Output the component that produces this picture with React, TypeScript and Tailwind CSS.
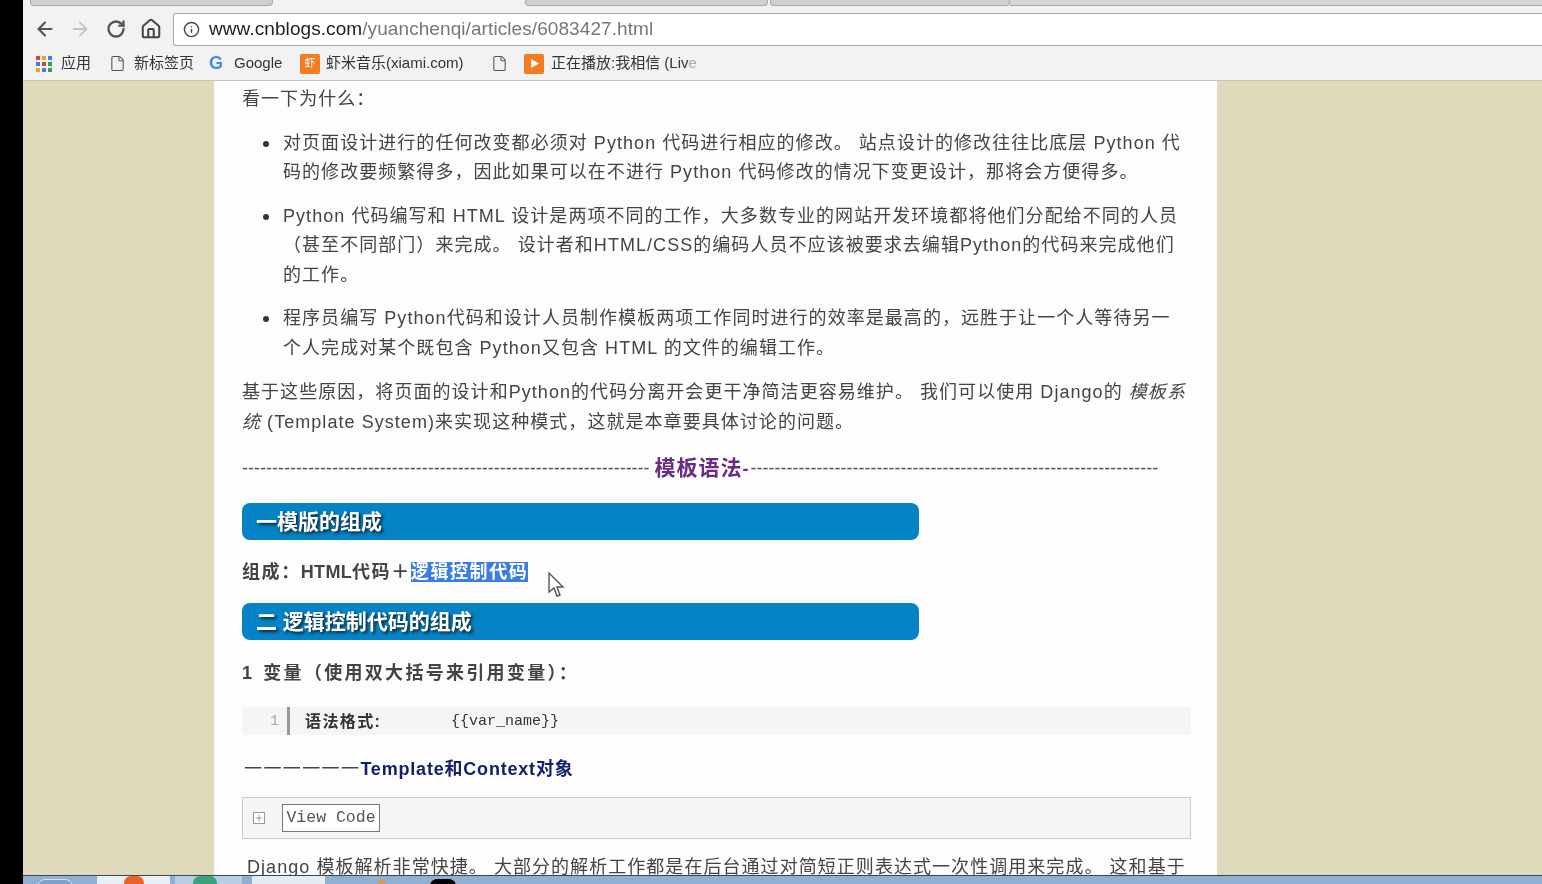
import React from "react"
import { ArrowLeft, ArrowRight, RotateCw, House, Info, File, Plus } from "lucide-react"

const bodyFont = "font-['Liberation_Sans','Noto_Sans_CJK_SC',sans-serif]"
const dashes = "-".repeat(68)

function Line({ children }: { children: React.ReactNode }) {
    return <div className="h-[29.5px] leading-[31.5px] whitespace-nowrap">{children}</div>
}

function Bullet({ lines }: { lines: string[] }) {
    return (
        <div className="relative pl-[41px]">
            <span className="absolute left-[21px] top-[13px] size-[6px] rounded-full bg-[#333]" />
            {lines.map((l) => <Line key={l}>{l}</Line>)}
        </div>
    )
}

function SectionBar({ children }: { children: React.ReactNode }) {
    return (
        <div className="h-[37px] w-[677px] rounded-[8px] bg-[#0583c4] pl-[14px] text-[21px] leading-[38px] font-bold tracking-normal text-white [text-shadow:2px_2px_3px_#123]">
            {children}
        </div>
    )
}

function Bookmark({ icon, label, className }: { icon: React.ReactNode; label: string; className: string }) {
    return (
        <div className={`flex items-center ${className}`}>
            {icon}
            <span className="whitespace-nowrap">{label}</span>
        </div>
    )
}

function AppsIcon() {
    const colors = ["#d9472b", "#f0a31c", "#3f7fe8", "#3f7fe8", "#d9472b", "#2f9e58", "#f0a31c", "#3f7fe8", "#2f9e58"]
    return (
        <div className="grid grid-cols-3 gap-[2px]">
            {colors.map((c, i) => <span key={i} className="size-[4px]" style={{ backgroundColor: c }} />)}
        </div>
    )
}

function TabStrip() {
    return (
        <div className="flex h-[12px] bg-[#f2f2f2]">
            <div className="ml-[7px] h-[6px] w-[243px] rounded-b-[4px] border border-t-0 border-[#a8a8a8] bg-[#cfcfcf]" />
            <div className="w-[252px]" />
            <div className="h-[6px] w-[243px] rounded-b-[4px] border border-t-0 border-[#a8a8a8] bg-[#cfcfcf]" />
            <div className="ml-[2px] h-[6px] w-[240px] rounded-b-[4px] border border-t-0 border-[#a8a8a8] bg-[#cfcfcf]" />
            <div className="h-[6px] flex-1 border-b border-[#a8a8a8] bg-[#d6d6d6]" />
        </div>
    )
}

function Toolbar() {
    return (
        <div className="flex h-[34px] items-center bg-[#f2f2f2] pl-[11px]">
            <ArrowLeft size={22} strokeWidth={2.4} className="text-[#555]" />
            <ArrowRight size={22} strokeWidth={2} className="ml-[13px] text-[#c4c4c4]" />
            <RotateCw size={20} strokeWidth={2.8} className="ml-[15px] text-[#555]" />
            <House size={22} strokeWidth={2.2} className="ml-[14px] text-[#444]" />
            <div className="ml-[11px] flex h-[33px] flex-1 items-center rounded-l-[3px] border border-r-0 border-[#a9a9a9] bg-white pl-[9px]">
                <Info size={17} strokeWidth={2} className="text-[#444]" />
                <span className="ml-[9px] text-[19px] tracking-[0.08px] text-[#777]">
                    <span className="text-[#222]">www.cnblogs.com</span>/yuanchenqi/articles/6083427.html
                </span>
            </div>
        </div>
    )
}

function BookmarkBar() {
    return (
        <div className="flex h-[35px] items-center border-b border-[#c8c6b8] bg-[#f2f2f2] pt-[1px] pl-[13px] text-[15px] text-[#333]">
            <Bookmark className="w-[73px] gap-[9px]" icon={<AppsIcon />} label="应用" />
            <Bookmark className="w-[100px] gap-[8px]" icon={<File size={17} strokeWidth={1.5} className="text-[#555]" />} label="新标签页" />
            <Bookmark
                className="w-[91px] gap-[11px]"
                icon={<span className="font-['Liberation_Sans',sans-serif] text-[18px] font-bold text-[#4285f4]">G</span>}
                label="Google"
            />
            <Bookmark
                className="w-[191px] gap-[6px]"
                icon={<span className="flex size-[20px] items-center justify-center rounded-[2px] bg-[#f27c21] text-[11px] text-white">虾</span>}
                label="虾米音乐(xiami.com)"
            />
            <File size={17} strokeWidth={1.5} className="text-[#555]" />
            <div className="ml-[16px] flex size-[20px] items-center justify-center rounded-[2px] bg-[#f27c21]">
                <svg viewBox="0 0 10 10" className="size-[11px]"><path d="M2 1l7 4-7 4z" fill="#fff" /></svg>
            </div>
            <span className="ml-[7px] whitespace-nowrap">
                正在播放:我相信 (Liv<span className="text-[#aaa]">e</span>
            </span>
        </div>
    )
}

function Article() {
    return (
        <div className={`h-full w-[1003px] overflow-hidden bg-[#fdfdfd] pt-[3px] pl-[28px] text-[18px] tracking-[1.05px] text-[#444] ${bodyFont}`}>
            <Line>看一下为什么：</Line>

            <div className="mt-[14px] flex flex-col gap-[14px]">
                <Bullet lines={["对页面设计进行的任何改变都必须对 Python 代码进行相应的修改。 站点设计的修改往往比底层 Python 代", "码的修改要频繁得多，因此如果可以在不进行 Python 代码修改的情况下变更设计，那将会方便得多。"]} />
                <Bullet lines={["Python 代码编写和 HTML 设计是两项不同的工作，大多数专业的网站开发环境都将他们分配给不同的人员", "（甚至不同部门）来完成。 设计者和HTML/CSS的编码人员不应该被要求去编辑Python的代码来完成他们", "的工作。"]} />
                <Bullet lines={["程序员编写 Python代码和设计人员制作模板两项工作同时进行的效率是最高的，远胜于让一个人等待另一", "个人完成对某个既包含 Python又包含 HTML 的文件的编辑工作。"]} />
            </div>

            <div className="mt-[15px]">
                <Line>基于这些原因，将页面的设计和Python的代码分离开会更干净简洁更容易维护。 我们可以使用 Django的 <em>模板系</em></Line>
                <Line><em>统</em> (Template System)来实现这种模式，这就是本章要具体讨论的问题。</Line>
            </div>

            <div className="mt-[17px] flex h-[30px] items-center leading-[32px] tracking-normal text-[#555]">
                <span className="whitespace-nowrap">{dashes}</span>
                <span className="ml-[5px] w-[96px] text-[21px] font-bold tracking-[1px] whitespace-nowrap text-[#6a2c80]">
                    模板语法<span className="text-[18px]">-</span>
                </span>
                <span className="whitespace-nowrap">{dashes}</span>
            </div>

            <div className="mt-[20px]"><SectionBar>一模版的组成</SectionBar></div>

            <div className="relative mt-[16px] h-[30px] leading-[32px] font-bold tracking-[1.6px]">
                组成：<span className="tracking-[0.3px]">HTML</span>代码＋<span className="bg-[#3b7de0] text-white">逻辑控制代码</span>
                <svg viewBox="0 0 18 26" className="absolute top-[16px] left-[306px] h-[26px] w-[18px]">
                    <path d="M1 1v19l5-4 3 8 3-1-3-8h6z" fill="#fff" stroke="#555" strokeWidth="1.4" />
                </svg>
            </div>

            <div className="mt-[17px]"><SectionBar>二 逻辑控制代码的组成</SectionBar></div>

            <div className="mt-[17px] h-[30px] leading-[32px] font-bold tracking-[2.3px] whitespace-nowrap">
                1<span className="ml-[9px]">变量（使用双大括号来引用变量）：</span>
            </div>

            <div className="mt-[20px] flex h-[28px] w-[949px] items-center bg-[#f5f5f5] pt-[2px] font-['Liberation_Mono','Noto_Sans_CJK_SC',monospace] text-[15px] tracking-normal">
                <span className="w-[37px] text-right text-[#aaa]">1</span>
                <span className="ml-[8px] -mt-[2px] h-[28px] w-[3px] bg-[#999]" />
                <span className="ml-[15px] w-[75px] font-['Liberation_Sans','Noto_Sans_CJK_SC',sans-serif] text-[16px] font-bold tracking-[1.4px] whitespace-nowrap text-[#333]">语法格式:</span>
                <span className="ml-[71px] text-[#333]">{"{{var_name}}"}</span>
            </div>

            <div className="mt-[18px] h-[30px] pl-[2px] leading-[32px] font-bold whitespace-nowrap text-[#13206b]">
                <span className="font-normal tracking-[1.4px] text-[#444]">一一一一一一</span>
                <span className="tracking-[0.8px]">Template和Context对象</span>
            </div>

            <div className="mt-[14px] flex h-[42px] w-[949px] items-center border border-[#ccc] bg-[#f5f5f5] pl-[10px]">
                <span className="flex size-[12px] items-center justify-center border border-[#999] bg-white">
                    <Plus size={10} strokeWidth={1.5} className="text-[#666]" />
                </span>
                <span className="ml-[17px] flex h-[28px] w-[98px] items-center justify-center border border-[#777] bg-white font-['Liberation_Mono',monospace] text-[16.5px] tracking-normal text-[#555]">
                    View Code
                </span>
            </div>

            <div className="mt-[13px] ml-[5px]">
                <Line>Django 模板解析非常快捷。 大部分的解析工作都是在后台通过对简短正则表达式一次性调用来完成。 这和基于</Line>
            </div>
        </div>
    )
}

function Taskbar() {
    return (
        <div className="relative flex h-[9px] border-t border-[#33475a] bg-[#8fb0d2]">
            <span className="absolute top-[3px] left-[14px] h-[16px] w-[36px] rounded-full border border-[#dde] bg-[#7ea2c8]" />
            <div className="ml-[74px] flex overflow-hidden">
                <div className="w-[73px] bg-[#e8eff6]"><span className="ml-[27px] block h-[14px] w-[20px] rounded-full bg-[#e8632a]" /></div>
                <div className="ml-[5px] w-[67px] bg-[#b7cde3]"><span className="ml-[18px] block h-[14px] w-[24px] rounded-full bg-[#3ba17c]" /></div>
                <div className="ml-[10px] w-[73px] bg-[#e3ebf3]" />
            </div>
            <span className="absolute top-[3px] left-[355px] h-[14px] w-[7px] rounded-full bg-[#d89a5c]" />
            <span className="absolute top-[3px] left-[407px] h-[14px] w-[26px] rounded-full bg-black" />
        </div>
    )
}

export default function App() {
    return (
        <div className={`flex h-[884px] w-[1542px] overflow-hidden bg-black blur-[0.4px] ${bodyFont}`}>
            <div className="w-[23px] shrink-0 bg-black" />
            <div className="flex min-w-0 flex-1 flex-col">
                <TabStrip />
                <Toolbar />
                <BookmarkBar />
                <main className="flex min-h-0 flex-1 bg-[#dedabb] pl-[191px]">
                    <Article />
                </main>
                <Taskbar />
            </div>
        </div>
    )
}
